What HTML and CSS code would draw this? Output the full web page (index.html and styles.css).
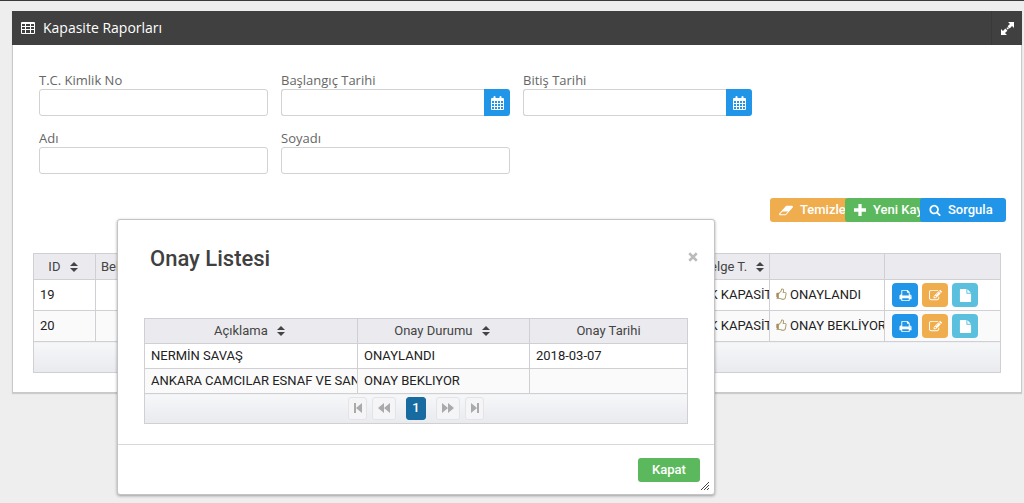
FILE: index.html
```html
<!DOCTYPE html>
<html lang="tr">
<head>
<meta charset="utf-8">
<title>Kapasite Raporları</title>
<link rel="stylesheet" href="styles.css">
</head>
<body>
<svg class="sprite" aria-hidden="true">
  <symbol id="i-sort" viewBox="0 0 8 10"><path d="M4 0l4 4H0zM0 6h8l-4 4z"/></symbol>
  <symbol id="i-cal" viewBox="0 0 13 14"><path fill-rule="evenodd" d="M1 2h1.500V1a1 1 0 0 1 2 0v1h4V1a1 1 0 0 1 2 0v1H12a1 1 0 0 1 1 1v10a1 1 0 0 1-1 1H1a1 1 0 0 1-1-1V3a1 1 0 0 1 1-1zM1 5v2h2V5zm3 0v2h2V5zm3 0v2h2V5zm3 0v2h2V5zM1 8v2h2V8zm3 0v2h2V8zm3 0v2h2V8zm3 0v2h2V8zM1 11v2h2v-2zm3 0v2h2v-2zm3 0v2h2v-2zm3 0v2h2v-2z"/></symbol>
  <symbol id="i-print" viewBox="0 0 1792 1792"><path d="M448 1536h896v-256h-896v256zm0-640h896v-384h-160q-40 0-68-28t-28-68v-160h-640v640zm1152 64q0-26-19-45t-45-19-45 19-19 45 19 45 45 19 45-19 19-45zm128 0v416q0 13-9.500 22.500t-22.500 9.500h-224v160q0 40-28 68t-68 28h-960q-40 0-68-28t-28-68v-160h-224q-13 0-22.500-9.500t-9.500-22.500v-416q0-79 56.500-135.500t135.500-56.500h64v-544q0-40 28-68t68-28h672q40 0 88 20t76 48l152 152q28 28 48 76t20 88v256h64q79 0 135.500 56.500t56.500 135.500z"/></symbol>
  <symbol id="i-edit" viewBox="0 0 1792 1792"><path d="M888 1184l116-116-152-152-116 116v56h96v96h56zm440-720q-16-16-33 1l-350 350q-17 17-1 33t33-1l350-350q17-17 1-33zm80 594v190q0 119-84.500 203.500t-203.500 84.500h-832q-119 0-203.500-84.500t-84.500-203.500v-832q0-119 84.500-203.500t203.500-84.500h832q63 0 117 25 15 7 18 23 3 17-9 29l-49 49q-14 14-32 8-23-6-45-6h-832q-66 0-113 47t-47 113v832q0 66 47 113t113 47h832q66 0 113-47t47-113v-126q0-13 9-22l64-64q15-15 35-7t20 29zm-96-738l288 288-672 672h-288v-288zm444 132l-92 92-288-288 92-92q28-28 68-28t68 28l152 152q28 28 28 68t-28 68z"/></symbol>
  <symbol id="i-file" viewBox="0 0 1792 1792"><path d="M1152 512v-472q22 14 36 28l408 408q14 14 28 36h-472zm-128 32q0 40 28 68t68 28h544v1056q0 40-28 68t-68 28h-1344q-40 0-68-28t-28-68v-1600q0-40 28-68t68-28h800v544z"/></symbol>
  <symbol id="i-search" viewBox="0 0 1792 1792"><path d="M1216 832q0-185-131.500-316.500t-316.500-131.500-316.500 131.500-131.500 316.500 131.500 316.500 316.500 131.500 316.500-131.500 131.500-316.500zm512 832q0 52-38 90t-90 38q-54 0-90-38l-343-342q-179 124-399 124-143 0-273.500-55.500t-225-150-150-225-55.500-273.500 55.500-273.500 150-225 225-150 273.500-55.500 273.500 55.500 225 150 150 225 55.500 273.500q0 220-124 399l343 343q37 37 37 90z"/></symbol>
  <symbol id="i-eraser" viewBox="0 0 1920 1792"><path d="M896 1408l336-384h-768l-336 384h768zm1013-1077q15 34 9.500 71.500t-30.500 65.500l-896 1024q-38 44-96 44h-768q-38 0-69.500-20.500t-47.500-54.500q-15-34-9.500-71.500t30.500-65.500l896-1024q38-44 96-44h768q38 0 69.500 20.500t47.500 54.500z"/></symbol>
  <symbol id="i-thumb" viewBox="0 0 1792 1792"><path d="M320 1344q0-26-19-45t-45-19q-27 0-45.500 19t-18.500 45q0 27 18.500 45.500t45.500 18.500q26 0 45-18.500t19-45.500zm1280-576q0-51-39-89.500t-89-38.500h-352q0-58 48-159.500t48-160.500q0-98-32-145t-128-47q-26 26-38 85t-30.500 125.500-59.500 109.500q-22 23-77 91-4 5-23 30t-31.500 41-34.500 42.500-40 44-38.500 35.500-40 27-35.500 9h-32v640h32q13 0 31.500 3t33 6.500 38 11 35 11.500 35.500 12.500 29 10.500q211 73 342 73h121q192 0 192-167 0-26-5-56 30-16 47.500-52.500t17.500-73.500-18-69q53-50 53-119 0-25-10-55.500t-25-47.500q32-1 53.500-47t21.500-81zm128-1q0 89-49 163 9 33 9 69 0 77-38 144 3 21 3 43 0 101-60 178 1 139-85 219.500t-227 80.500h-129q-96 0-189.500-22.500t-216.500-65.500q-116-40-138-40h-288q-53 0-90.500-37.500t-37.500-90.500v-640q0-53 37.500-90.500t90.500-37.500h274q36-24 137-155 58-75 107-128 24-25 35.500-85.500t30.500-126.500 62-108q39-37 90-37 84 0 151 32.500t102 101.500 35 186q0 93-48 192h176q104 0 180 76t76 179z"/></symbol>
  <symbol id="i-next" viewBox="0 0 12 10"><path d="M0 0l6 5-6 5zM6 0l6 5-6 5z"/></symbol>
  <symbol id="i-last" viewBox="0 0 12 10"><path d="M2 0l6 5-6 5zM8 0h2v10H8z"/></symbol>
</svg>

<section class="panel">
  <header class="panel-head">
    <svg class="icon-table" viewBox="0 0 14 12"><path fill-rule="evenodd" d="M1 0h12a1 1 0 0 1 1 1v10a1 1 0 0 1-1 1H1a1 1 0 0 1-1-1V1a1 1 0 0 1 1-1zM1 2v2h3V2zm4 0v2h4V2zm5 0v2h3V2zM1 5v2h3V5zm4 0v2h4V5zm5 0v2h3V5zM1 8v3h3V8zm4 0v3h4V8zm5 0v3h3V8z"/></svg>
    <h1 class="panel-title">Kapasite Raporları</h1>
    <button class="expand" type="button" aria-label="Tam ekran">
      <svg viewBox="0 0 12 12"><path d="M6.500 0H12v5.500L10.200 3.700 8 5.900 6.100 4l2.200-2.200zM5.900 8L3.700 10.200 5.500 12H0V6.500l1.800 1.800L4 6.100zM5.200 5.200l1.600-.4.400 1.600-1.800.6z"/></svg>
    </button>
  </header>
  <div class="panel-body">
    <form class="filters">
      <div class="field"><label for="tc">T.C. Kimlik No</label><input class="text" id="tc" type="text"></div>
      <div class="field"><label for="start">Başlangıç Tarihi</label>
        <div class="group"><input class="text" id="start" type="text"><button class="cal" type="button" aria-label="Takvim"><svg><use href="#i-cal"/></svg></button></div></div>
      <div class="field"><label for="end">Bitiş Tarihi</label>
        <div class="group"><input class="text" id="end" type="text"><button class="cal" type="button" aria-label="Takvim"><svg><use href="#i-cal"/></svg></button></div></div>
      <div class="field row-start"><label for="ad">Adı</label><input class="text" id="ad" type="text"></div>
      <div class="field"><label for="soyad">Soyadı</label><input class="text" id="soyad" type="text"></div>
    </form>
    <div class="actions">
      <div class="slot"><button class="btn orange" type="button"><svg class="wide"><use href="#i-eraser"/></svg>Temizle</button></div>
      <div class="slot"><button class="btn green" type="button"><svg viewBox="0 0 11 11"><path d="M4 0h3v4h4v3H7v4H4V7H0V4h4z"/></svg>Yeni Kayıt</button></div>
      <div class="slot"><button class="btn blue" type="button"><svg><use href="#i-search"/></svg>Sorgula</button></div>
    </div>
    <table class="grid reports">
      <colgroup><col class="c-id"><col><col class="c-type"><col class="c-state"><col class="c-tools"></colgroup>
      <thead><tr>
        <th>ID <svg class="sort"><use href="#i-sort"/></svg></th>
        <th class="left">Belge No</th>
        <th>Belge T. <svg class="sort"><use href="#i-sort"/></svg></th>
        <th></th><th></th>
      </tr></thead>
      <tbody>
        <tr><td>19</td><td></td><td>EK KAPASİTE</td><td><svg class="thumb"><use href="#i-thumb"/></svg>ONAYLANDI</td>
          <td><div class="tools"><button class="tool blue" type="button" aria-label="Yazdır"><svg><use href="#i-print"/></svg></button><button class="tool orange" type="button" aria-label="Düzenle"><svg><use href="#i-edit"/></svg></button><button class="tool cyan" type="button" aria-label="Belge"><svg><use href="#i-file"/></svg></button></div></td></tr>
        <tr><td>20</td><td></td><td>EK KAPASİTE</td><td><svg class="thumb"><use href="#i-thumb"/></svg>ONAY BEKLİYOR</td>
          <td><div class="tools"><button class="tool blue" type="button" aria-label="Yazdır"><svg><use href="#i-print"/></svg></button><button class="tool orange" type="button" aria-label="Düzenle"><svg><use href="#i-edit"/></svg></button><button class="tool cyan" type="button" aria-label="Belge"><svg><use href="#i-file"/></svg></button></div></td></tr>
      </tbody>
      <tfoot><tr><td colspan="5"></td></tr></tfoot>
    </table>
  </div>
</section>

<div class="dialog" role="dialog" aria-labelledby="dlg-title">
  <header class="dialog-head">
    <h2 class="dialog-title" id="dlg-title">Onay Listesi</h2>
    <button class="close" type="button" aria-label="Pencereyi kapat"><svg viewBox="0 0 8 8"><path d="M1 1l6 6M7 1L1 7"/></svg></button>
  </header>
  <div class="dialog-body">
    <table class="grid approvals">
      <colgroup><col class="c-desc"><col class="c-status"><col></colgroup>
      <thead><tr>
        <th>Açıklama <svg class="sort"><use href="#i-sort"/></svg></th>
        <th>Onay Durumu <svg class="sort"><use href="#i-sort"/></svg></th>
        <th>Onay Tarihi</th>
      </tr></thead>
      <tbody>
        <tr><td>NERMİN SAVAŞ</td><td>ONAYLANDI</td><td>2018-03-07</td></tr>
        <tr><td>ANKARA CAMCILAR ESNAF VE SANATKARLAR</td><td>ONAY BEKLIYOR</td><td></td></tr>
      </tbody>
      <tfoot><tr><td colspan="3"><div class="pager">
        <button class="page narrow flip" type="button" aria-label="İlk"><svg><use href="#i-last"/></svg></button>
        <button class="page flip" type="button" aria-label="Önceki"><svg><use href="#i-next"/></svg></button>
        <button class="page current" type="button">1</button>
        <button class="page" type="button" aria-label="Sonraki"><svg><use href="#i-next"/></svg></button>
        <button class="page narrow" type="button" aria-label="Son"><svg><use href="#i-last"/></svg></button>
      </div></td></tr></tfoot>
    </table>
  </div>
  <footer class="dialog-foot">
    <button class="btn green ok" type="button">Kapat</button>
    <svg class="grip" viewBox="0 0 8 8"><path d="M0 8l8-8M3 8l5-5M6 8l2-2"/></svg>
  </footer>
</div>
</body>
</html>
```
FILE: styles.css
```css
* { box-sizing: border-box; }
body {
  margin: 0;
  padding: 10px 2px 0 12px;
  border-top: 1px solid #3c393c;
  min-height: 100vh;
  background: #eeeeee;
  color: #222;
  font: 13px/16px Roboto, sans-serif;
}
button, input { font: inherit; margin: 0; }
button { border: 0; padding: 0; cursor: pointer; }
svg { fill: currentColor; display: block; }
.sprite { position: absolute; width: 0; height: 0; }

.panel {
  background: #fff;
  border: 1px solid #c9c9c9;
  border-top: 0;
  box-shadow: 0 1px 1px #ccc;
}
.panel-head {
  display: flex;
  align-items: center;
  height: 34px;
  margin: 0 -1px;
  padding-left: 9px;
  background: #404040;
  color: #fff;
}
.icon-table { width: 14px; height: 12px; margin-bottom: 1px; }
.panel-title {
  flex: 1;
  margin: 0 0 0 8px;
  font: 14px/18px "Open Sans", sans-serif;
}
.expand {
  display: grid;
  place-items: center;
  width: 31px;
  height: 34px;
  border-left: 1px solid #393939;
  background: none;
  color: #fff;
}
.expand svg { width: 13px; height: 13px; }
.panel-body { padding: 27px 20px 19px; }

.filters { display: grid; grid-template-columns: repeat(4, 1fr); row-gap: 14px; }
.field { padding: 0 7px 0 6px; }
.row-start { grid-column: 1; }
.field label {
  display: block;
  color: #666;
  font: 13px/17px "Open Sans", sans-serif;
}
.text {
  display: block;
  width: 100%;
  height: 27px;
  border: 1px solid #d2d2d2;
  border-radius: 3px;
  background: #fff;
  padding: 4px 6px;
}
.group { display: flex; }
.group .text { flex: 1; min-width: 0; border-right: 0; border-radius: 3px 0 0 3px; }
.cal {
  display: grid;
  place-items: center;
  width: 26px;
  background: #2196e8;
  color: #fff;
  border-radius: 0 3px 3px 0;
}
.cal svg { width: 13px; height: 14px; }

.actions { display: flex; justify-content: flex-end; margin: 24px 6px 31px 0; }
.slot { width: 75px; }
.btn {
  display: flex;
  align-items: center;
  gap: 7px;
  width: 86px;
  height: 24px;
  padding-left: 9px;
  border-radius: 3px;
  color: #fff;
  font-weight: 500;
  white-space: nowrap;
  position: relative;
}
.btn svg { width: 12px; height: 12px; flex: none; }
.btn .wide { width: 14px; height: 13px; }
.orange { background: #f0ad4e; }
.green { background: #5cb85c; }
.blue { background: #2196e8; }
.cyan { background: #5bc0de; }

.grid { width: 100%; table-layout: fixed; border-collapse: collapse; }
.grid th, .grid td {
  border: 1px solid #d0d0d4;
  padding: 0 6px;
  overflow: hidden;
  white-space: nowrap;
  text-align: left;
}
.grid th {
  height: 26px;
  background: #ebebef;
  color: #444;
  font-weight: 400;
  text-align: center;
}
.grid th.left { text-align: left; padding-left: 5px; }
.grid tbody tr:nth-child(2) { background: #fafafb; }
.grid tfoot td { background: linear-gradient(#f6f7f9, #e9eaee); }
.sort { display: inline-block; width: 8px; height: 10px; margin: 0 3px 0 6px; vertical-align: -1px; color: #444; }
.reports td { height: 31px; }
.reports td:nth-child(4) { padding-left: 5px; padding-right: 0; }
.reports td:nth-child(5) { padding-left: 7px; }
.c-id { width: 62px; }
.c-type { width: 74px; }
.c-state { width: 115px; }
.c-tools { width: 116px; }
.thumb { display: inline-block; width: 12px; height: 13px; margin-right: 3px; vertical-align: -2px; color: #a38f5c; }
.tools { display: flex; gap: 4px; }
.tool {
  display: grid;
  place-items: center;
  width: 26px;
  height: 24px;
  border-radius: 4px;
  color: #fff;
}
.tool svg { width: 13px; height: 13px; }

.dialog {
  position: absolute;
  top: 219px;
  left: 117px;
  width: 598px;
  background: #fff;
  border: 1px solid #c4c4c4;
  border-radius: 3px;
  box-shadow: 0 1px 3px rgba(0, 0, 0, .35);
}
.dialog-head { display: flex; justify-content: space-between; align-items: center; padding: 25px 16px 45px 32px; }
.dialog-title { margin: 0; color: #404040; font-size: 22px; line-height: 28px; font-weight: 500; }
.close { background: none; color: #bbb; }
.close svg { width: 10px; height: 10px; margin-bottom: 5px; fill: none; stroke: currentColor; stroke-width: 2; }
.dialog-body { padding: 0 26px 20px; }
.approvals thead th { height: 25px; }
.approvals tbody td { height: 25px; padding-bottom: 1px; }
.approvals tfoot td { height: 30px; padding: 0 0 1px; }
.c-desc { width: 213px; }
.c-status { width: 172px; }
.pager { display: flex; justify-content: center; gap: 5px; }
.page {
  display: grid;
  place-items: center;
  width: 24px;
  height: 23px;
  border: 1px solid #e4e4e7;
  border-radius: 3px;
  background: #f5f5f7;
  color: #aaa;
}
.page svg { width: 12px; height: 10px; }
.narrow { width: 19px; }
.flip svg { transform: scaleX(-1); }
.current { width: 20px; margin: 0 5px; border-color: #186ba0; background: #186ba0; color: #fff; font-weight: 500; }
.dialog-foot {
  position: relative;
  display: flex;
  justify-content: flex-end;
  padding: 13px 14px 12px;
  border-top: 1px solid #d8d8d8;
}
.ok { width: 62px; padding: 0; justify-content: center; }
.grip { position: absolute; right: 5px; bottom: 4px; width: 8px; height: 8px; fill: none; stroke: #444; }
```
